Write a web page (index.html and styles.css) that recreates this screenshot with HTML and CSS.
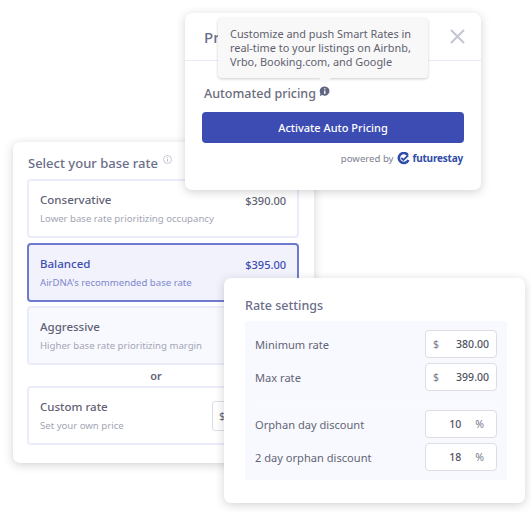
FILE: index.html
```html
<!DOCTYPE html>
<html lang="en">

<head>
    <meta charset="UTF-8" />
    <meta name="viewport" content="width=device-width, initial-scale=1.0" />
    <title>Pricing settings</title>
    <link rel="stylesheet" href="styles.css">
</head>

<body>
    <div class="canvas">
        <!-- base rate card, sits under the other two -->
        <div class="card base-card">
            <div class="base-title">
                <h3>Select your base rate</h3>
                <svg class="hint" width="9" height="9" viewBox="0 0 9 9">
                    <circle cx="4.5" cy="4.5" r="4" fill="none" stroke="#b9bccb" stroke-width="0.8" />
                    <path d="M4.5 3.8v3M4.5 2v1" stroke="#b9bccb" stroke-width="0.9" />
                </svg>
            </div>
            <div class="option">
                <div>
                    <div class="option-name">Conservative</div>
                    <div class="option-desc">Lower base rate prioritizing occupancy</div>
                </div>
                <div class="option-price">$390.00</div>
            </div>
            <div class="option selected">
                <div>
                    <div class="option-name">Balanced</div>
                    <div class="option-desc">AirDNA's recommended base rate</div>
                </div>
                <div class="option-price">$395.00</div>
            </div>
            <div class="option muted">
                <div>
                    <div class="option-name">Aggressive</div>
                    <div class="option-desc">Higher base rate prioritizing margin</div>
                </div>
            </div>
            <div class="or">or</div>
            <div class="option">
                <div>
                    <div class="option-name">Custom rate</div>
                    <div class="option-desc">Set your own price</div>
                </div>
                <div class="custom-input">$</div>
            </div>
        </div>

        <div class="card pricing-card">
            <div class="pricing-head">
                <h2>Pr</h2>
                <svg class="close" width="15" height="15" viewBox="0 0 15 15">
                    <path d="M1 1l13 13M14 1L1 14" stroke="#c3c6d4" stroke-width="2" fill="none" />
                </svg>
            </div>
            <div class="pricing-body">
                <div class="auto-label">
                    <span>Automated pricing</span>
                    <svg class="auto-icon" width="11" height="11" viewBox="0 0 11 11">
                        <path d="M5.8 0.5a4.6 4.6 0 1 1-2.6 8.4L0.8 10l0.6-2.6A4.6 4.6 0 0 1 5.8 0.5z" fill="#5f6480" />
                        <path d="M5.8 4.6v3.4M5.8 2.3v1.2" stroke="#fff" stroke-width="1.3" />
                    </svg>
                </div>
                <button class="activate-btn">Activate Auto Pricing</button>
                <div class="powered">
                    <span class="powered-by">powered by</span>
                    <svg width="13" height="13" viewBox="0 0 13 13">
                        <path d="M10.8 3A5 5 0 1 0 11.4 8" fill="none" stroke="#2f4da8" stroke-width="2.6" />
                        <path d="M4.2 5.8l2.2 2.2 4.8-4.6" fill="none" stroke="#2f4da8" stroke-width="1.8" />
                    </svg>
                    <span class="futurestay">futurestay</span>
                </div>
            </div>
        </div>

        <div class="tooltip">Customize and push Smart Rates in real-time to your listings on Airbnb, Vrbo, Booking.com, and Google</div>

        <div class="card rate-card">
            <h3>Rate settings</h3>
            <div class="rate-panel">
                <div class="rate-group">
                    <div class="rate-row">
                        <span>Minimum rate</span>
                        <div class="rate-input"><span class="unit">$</span><b>380.00</b></div>
                    </div>
                    <div class="rate-row">
                        <span>Max rate</span>
                        <div class="rate-input"><span class="unit">$</span><b>399.00</b></div>
                    </div>
                </div>
                <div class="rate-group discounts">
                    <div class="rate-row">
                        <span>Orphan day discount</span>
                        <div class="rate-input percent"><b>10</b><span class="unit">%</span></div>
                    </div>
                    <div class="rate-row">
                        <span>2 day orphan discount</span>
                        <div class="rate-input percent"><b>18</b><span class="unit">%</span></div>
                    </div>
                </div>
            </div>
        </div>
    </div>
</body>

</html>
```

FILE: styles.css
```css
body {
    font-family: "Noto Sans", sans-serif;
    margin: 0;
    background-color: #ffffff;
    color: #5f6275;
}

h2,
h3 {
    margin: 0;
    font-weight: 500;
}

.canvas {
    position: relative;
    width: 531px;
    height: 512px;
    overflow: hidden;
}

.card {
    position: absolute;
    box-sizing: border-box;
    background-color: white;
    border-radius: 7px;
    box-shadow: 0 2px 10px rgba(50, 50, 70, 0.22);
}

/* base rate card */
.base-card {
    left: 13px;
    top: 142px;
    width: 301px;
    height: 321px;
    padding: 12px 15px 0 14px;
}

.base-title {
    display: flex;
    align-items: flex-start;
    gap: 5px;
    height: 25px;
    padding-left: 1px;
}

.base-title h3 {
    font-size: 13px;
    line-height: 19px;
    color: #6b6e88;
}

.hint {
    margin-top: 1px;
}

.option {
    box-sizing: border-box;
    display: flex;
    justify-content: space-between;
    align-items: flex-start;
    height: 59px;
    margin-bottom: 4.5px;
    padding: 10px 11px 0 11px;
    border: 2px solid #ebecfa;
    border-radius: 4px;
}

.option.selected {
    background-color: #f1f2fb;
    border-color: #6f7acf;
    color: #3f4db3;
}

.option.muted {
    background-color: #f8f9fe;
}

.option-name {
    font-size: 11.5px;
    line-height: 18px;
    font-weight: 500;
}

.option-desc {
    font-size: 9.6px;
    line-height: 14px;
    margin-top: 3px;
    color: #a3a5b5;
}

.selected .option-desc {
    color: #7f88cf;
}

.option-price {
    font-size: 11px;
    line-height: 18px;
    margin-top: 1px;
    font-weight: 500;
}

.or {
    height: 12px;
    margin-top: 1.5px;
    margin-bottom: 4px;
    padding-right: 14px;
    font-size: 11px;
    line-height: 12px;
    font-weight: 600;
    text-align: center;
}

.custom-input {
    box-sizing: border-box;
    width: 74px;
    height: 30px;
    margin-top: 3px;
    padding-left: 6px;
    font-size: 11px;
    line-height: 28px;
    border: 1px solid #dcdde6;
    border-radius: 3px;
}

/* auto pricing card */
.pricing-card {
    left: 185px;
    top: 13px;
    width: 296px;
    height: 177px;
}

.pricing-head {
    box-sizing: border-box;
    display: flex;
    justify-content: space-between;
    align-items: center;
    height: 48px;
    padding: 0 16px 0 19px;
    border-bottom: 1px solid #e9eaf7;
}

.pricing-head h2 {
    font-size: 15px;
    color: #6b6e88;
}

.pricing-body {
    padding: 23px 17px 0;
}

.auto-label {
    display: flex;
    align-items: flex-start;
    gap: 3px;
    height: 19px;
    padding-left: 2px;
    font-size: 12.5px;
    line-height: 19px;
    font-weight: 500;
    color: #6a6c7c;
}

.auto-icon {
    margin-top: 2px;
}

.activate-btn {
    display: block;
    width: 262px;
    height: 31px;
    margin-top: 9px;
    background-color: #3d4cb3;
    color: white;
    border: none;
    border-radius: 4px;
    font-family: inherit;
    font-size: 11px;
    font-weight: 500;
}

.powered {
    display: flex;
    justify-content: flex-end;
    align-items: center;
    gap: 2px;
    margin-top: 8px;
    margin-right: 1px;
    font-size: 10px;
    line-height: 15px;
    color: #7d7f8e;
}

.powered-by {
    margin-right: 2px;
    font-size: 9.6px;
}

.futurestay {
    font-size: 10px;
    font-weight: 700;
    letter-spacing: -0.2px;
    color: #2f4da8;
}

.tooltip {
    position: absolute;
    left: 218px;
    top: 18px;
    box-sizing: border-box;
    width: 210px;
    height: 60px;
    padding: 9px 12px;
    background-color: #f8f8f8;
    border-radius: 4px;
    box-shadow: 0 1px 3px rgba(0, 0, 0, 0.2);
    font-size: 10.9px;
    line-height: 14px;
    color: #5f616e;
}

.tooltip::after {
    content: "";
    position: absolute;
    left: 101px;
    bottom: -6px;
    border-left: 6px solid transparent;
    border-right: 6px solid transparent;
    border-top: 6px solid #f8f8f8;
}

/* rate settings card */
.rate-card {
    left: 224px;
    top: 278px;
    width: 301px;
    height: 225px;
    padding: 18px 18px 0 21px;
}

.rate-card h3 {
    height: 25px;
    font-size: 12.5px;
    line-height: 19px;
    color: #6b6e88;
}

.rate-panel {
    box-sizing: border-box;
    height: 159px;
    padding: 9px 10px 0;
    background-color: #f8f9fe;
}

.rate-group {
    display: flex;
    flex-direction: column;
    gap: 5px;
}

.discounts {
    margin-top: 9px;
    padding-top: 9px;
    border-top: 1px solid #fbfbff;
}

.rate-row {
    display: flex;
    justify-content: space-between;
    align-items: center;
    font-size: 11.1px;
    color: #636575;
}

.rate-input {
    box-sizing: border-box;
    display: flex;
    justify-content: space-between;
    align-items: center;
    width: 72px;
    height: 28px;
    padding: 0 7px;
    background-color: white;
    border: 1px solid #dcdde6;
    border-radius: 4px;
    font-size: 10.5px;
}

.rate-input b {
    font-weight: 500;
    color: #50525f;
}

.rate-input.percent {
    justify-content: flex-end;
    gap: 14px;
    padding-right: 12px;
}

.unit {
    font-size: 10.5px;
    color: #777a8c;
}
```
